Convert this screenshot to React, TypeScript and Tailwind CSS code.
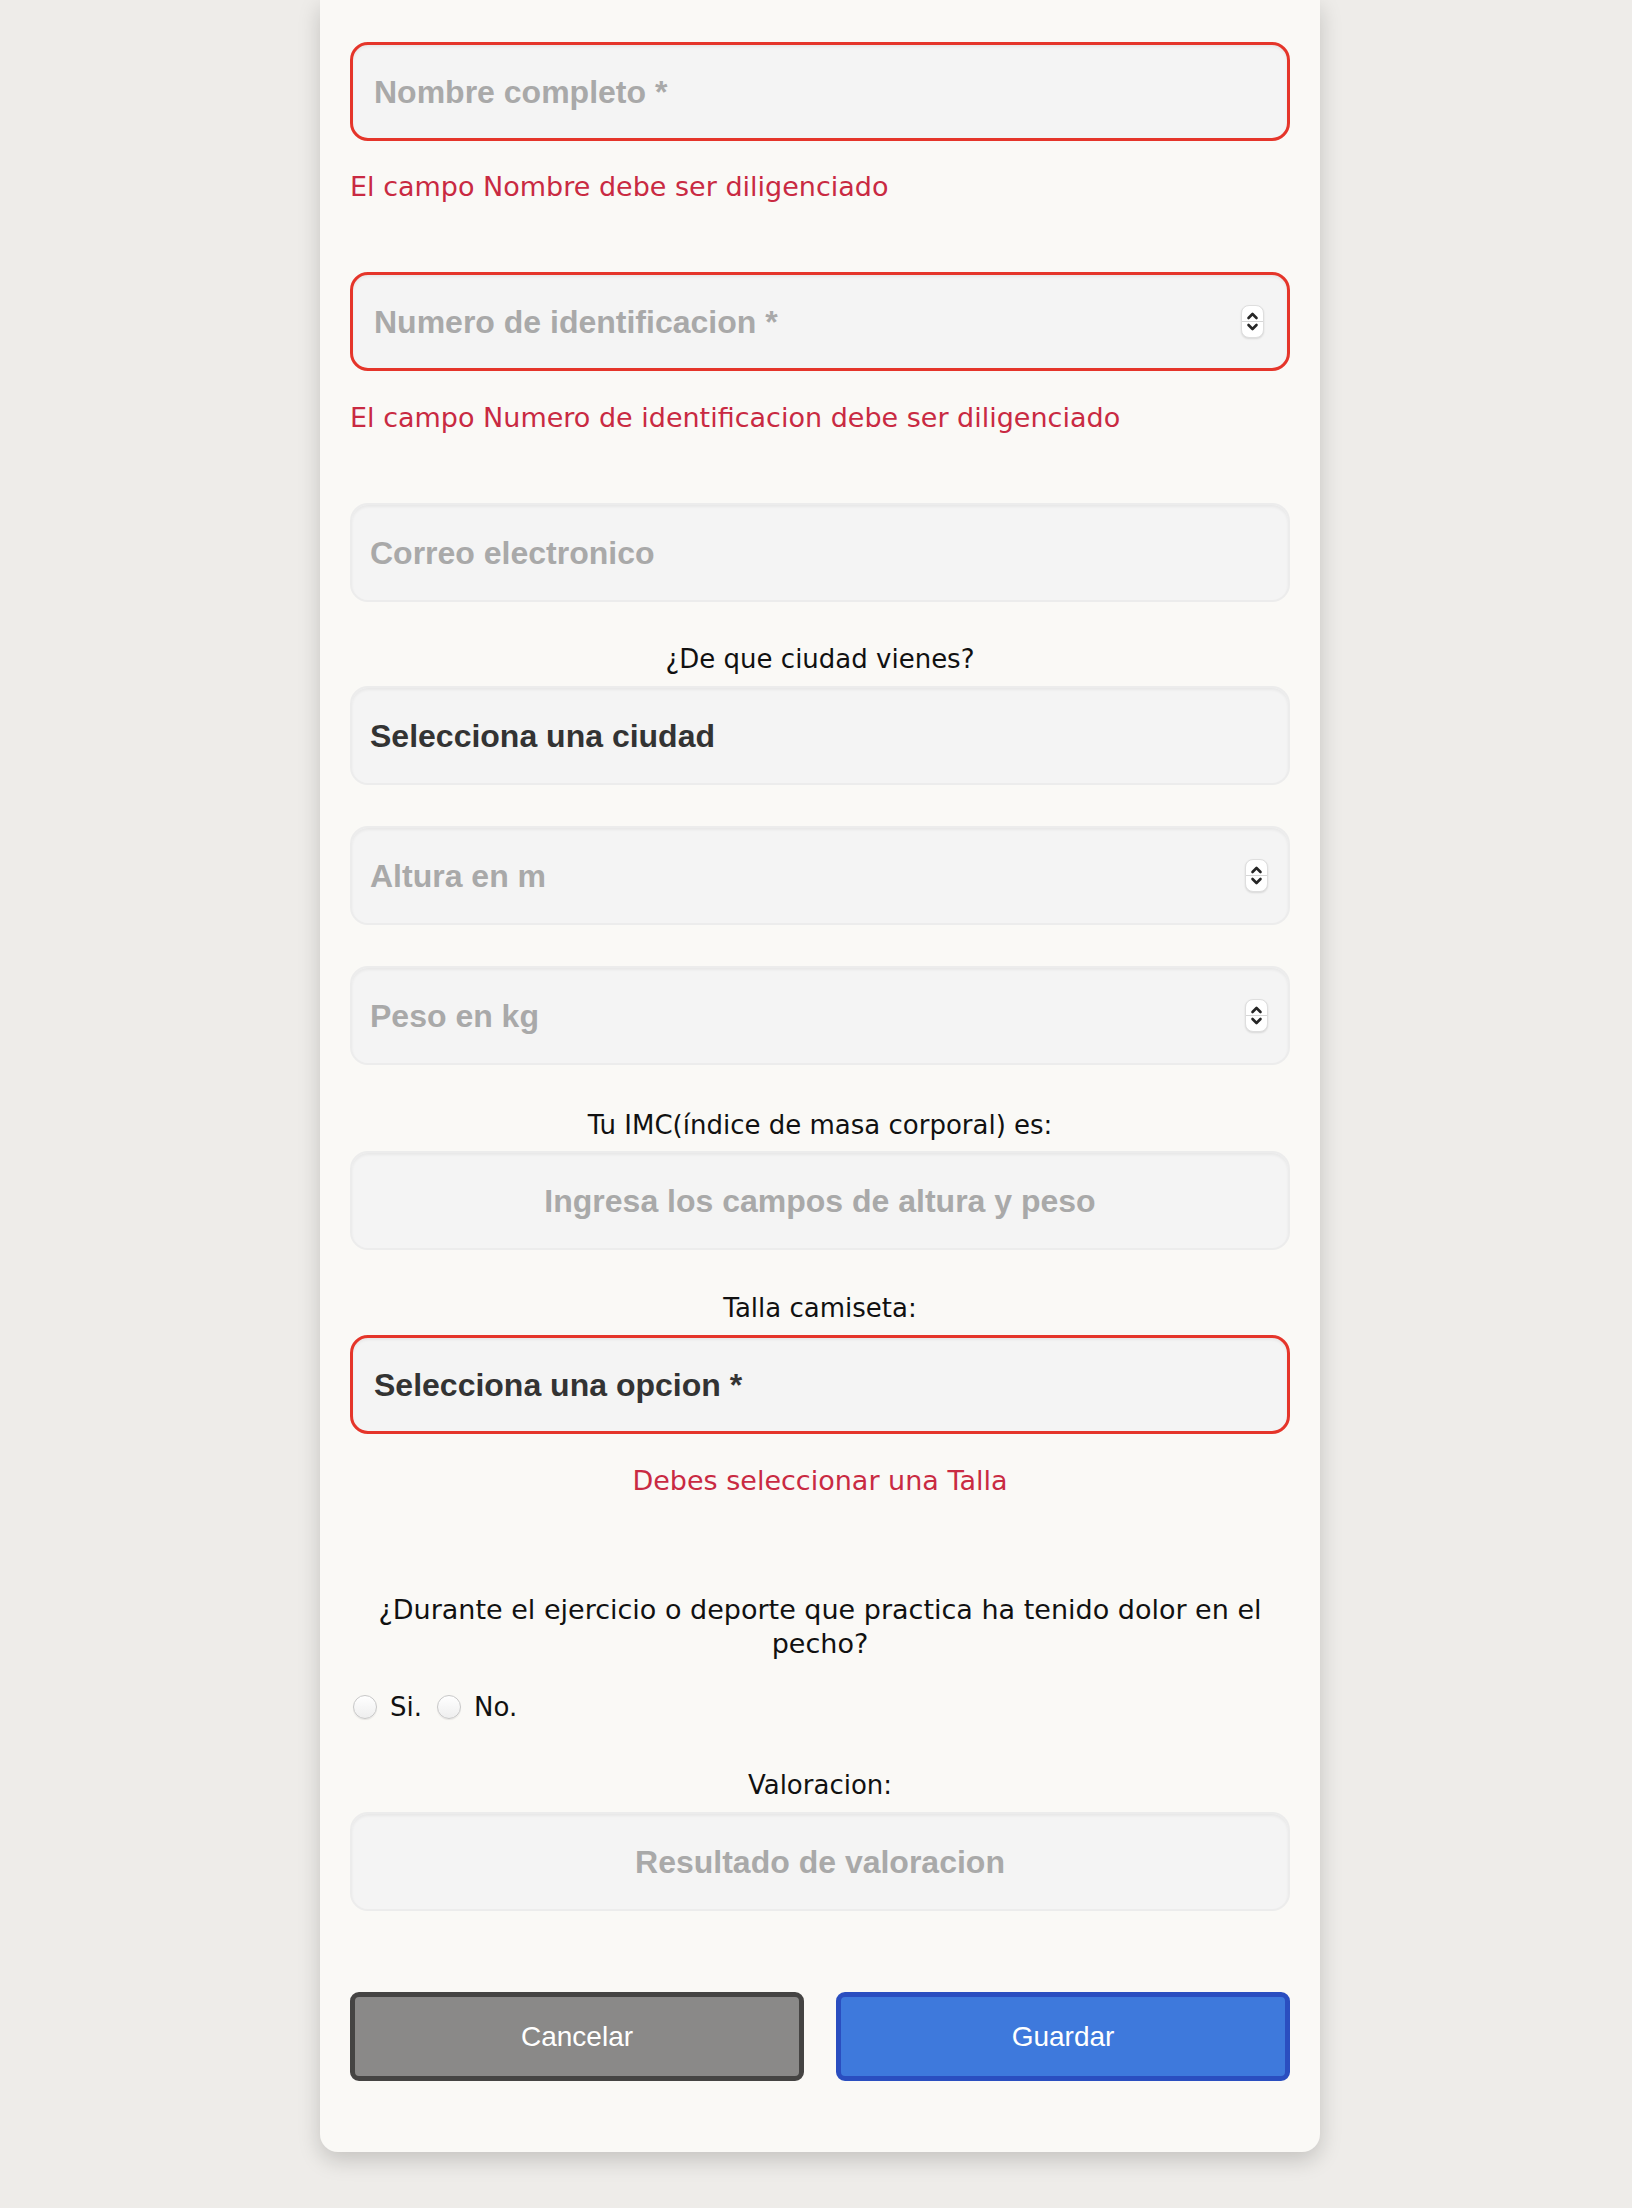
import type { ReactNode } from 'react'

const body = "font-['DejaVu_Sans','Lucida_Grande',sans-serif] text-[26px] leading-[34px]"
const fieldFont = "font-['Liberation_Sans',Arial,sans-serif] text-[32px] font-bold"
const fieldBox = 'flex h-[99px] w-full items-center rounded-[18px] bg-[#f4f4f4] shadow-[inset_0_2px_3px_rgba(0,0,0,0.05)]'
const okBorder = 'border-2 border-[#ececec] px-[18px]'
const badBorder = 'border-[3px] border-[#e5352a] px-[21px]'

function Stepper() {
  return (
    <div className="ml-3 mr-[2px] flex h-[33px] w-[23px] flex-col items-center justify-center rounded-[8px] border border-[#dedede] bg-white shadow-[0_1px_2px_rgba(0,0,0,0.12)]">
      <svg width="15" height="11" viewBox="0 0 15 11">
        <path d="M3.5 8 7.5 4 11.5 8" fill="none" stroke="#262626" strokeWidth="2.6" strokeLinecap="round" strokeLinejoin="round" />
      </svg>
      <div className="h-px w-full bg-[#d6d6d6]" />
      <svg width="15" height="11" viewBox="0 0 15 11">
        <path d="M3.5 3 7.5 7 11.5 3" fill="none" stroke="#262626" strokeWidth="2.6" strokeLinecap="round" strokeLinejoin="round" />
      </svg>
    </div>
  )
}

function Field({ placeholder, error, number, center }: { placeholder: string; error?: boolean; number?: boolean; center?: boolean }) {
  return (
    <div className={`${fieldBox} ${error ? badBorder : okBorder}`}>
      <input
        type="text"
        placeholder={placeholder}
        className={`${fieldFont} min-w-0 flex-1 bg-transparent text-[#333] outline-none placeholder:text-[#a9a9a9] ${center ? 'text-center' : ''}`}
      />
      {number && <Stepper />}
    </div>
  )
}

function Select({ label, error, options }: { label: string; error?: boolean; options: string[] }) {
  return (
    <div className={`${fieldBox} ${error ? badBorder : okBorder}`}>
      <select className={`${fieldFont} w-full appearance-none bg-transparent text-[#333] outline-none`} defaultValue="">
        <option value="">{label}</option>
        {options.map((o) => (
          <option key={o} value={o}>
            {o}
          </option>
        ))}
      </select>
    </div>
  )
}

function Label({ children, className = '' }: { children: ReactNode; className?: string }) {
  return <p className={`${body} text-center text-[#111] ${className}`}>{children}</p>
}

function ErrorText({ children, className = '' }: { children: ReactNode; className?: string }) {
  return <p className={`${body} text-[27px] text-[#c92a42] ${className}`}>{children}</p>
}

function Radio({ name }: { name: string }) {
  return (
    <input
      type="radio"
      name={name}
      className="h-[24px] w-[24px] appearance-none rounded-full border border-[#c8c8c8] bg-gradient-to-b from-white to-[#eeeeee] shadow-[0_1px_1px_rgba(0,0,0,0.08)]"
    />
  )
}

export default function App() {
  return (
    <div className="min-h-screen bg-[#eeece9]">
      <div className="ml-[320px] w-[1000px] rounded-b-[18px] bg-[#faf9f6] px-[30px] pt-[42px] pb-[71px] shadow-[0_8px_22px_rgba(0,0,0,0.18)]">
        <Field placeholder="Nombre completo *" error />
        <ErrorText className="mt-[29px]">El campo Nombre debe ser diligenciado</ErrorText>

        <div className="mt-[68px]">
          <Field placeholder="Numero de identificacion *" error number />
        </div>
        <ErrorText className="mt-[30px]">El campo Numero de identificacion debe ser diligenciado</ErrorText>

        <div className="mt-[68px]">
          <Field placeholder="Correo electronico" />
        </div>

        <Label className="mt-[40px]">¿De que ciudad vienes?</Label>
        <div className="mt-[10px]">
          <Select label="Selecciona una ciudad" options={['Bogota', 'Medellin', 'Cali', 'Barranquilla']} />
        </div>

        <div className="mt-[41px]">
          <Field placeholder="Altura en m" number />
        </div>
        <div className="mt-[41px]">
          <Field placeholder="Peso en kg" number />
        </div>

        <Label className="mt-[43px]">Tu IMC(índice de masa corporal) es:</Label>
        <div className="mt-[9px]">
          <Field placeholder="Ingresa los campos de altura y peso" center />
        </div>

        <Label className="mt-[41px]">Talla camiseta:</Label>
        <div className="mt-[10px]">
          <Select label="Selecciona una opcion *" error options={['S', 'M', 'L', 'XL']} />
        </div>
        <ErrorText className="mt-[30px] text-center">Debes seleccionar una Talla</ErrorText>

        <Label className="mt-[95px] text-[27px]">¿Durante el ejercicio o deporte que practica ha tenido dolor en el pecho?</Label>

        <div className={`${body} mt-[29px] ml-[3px] flex items-center text-[#111]`}>
          <Radio name="dolor" />
          <span className="ml-[13px]">Si.</span>
          <span className="ml-[15px] flex items-center">
            <Radio name="dolor" />
          </span>
          <span className="ml-[13px]">No.</span>
        </div>

        <Label className="mt-[44px]">Valoracion:</Label>
        <div className="mt-[10px]">
          <Field placeholder="Resultado de valoracion" center />
        </div>

        <div className="mt-[81px] grid grid-cols-2 gap-[32px]">
          <button className="h-[89px] rounded-[9px] border-[5px] border-[#454443] bg-[#8a8988] font-['Liberation_Sans',Arial,sans-serif] text-[28px] text-white">
            Cancelar
          </button>
          <button className="h-[89px] rounded-[9px] border-[5px] border-[#2a4ec0] bg-[#3e79dc] font-['Liberation_Sans',Arial,sans-serif] text-[28px] text-white">
            Guardar
          </button>
        </div>
      </div>
    </div>
  )
}
